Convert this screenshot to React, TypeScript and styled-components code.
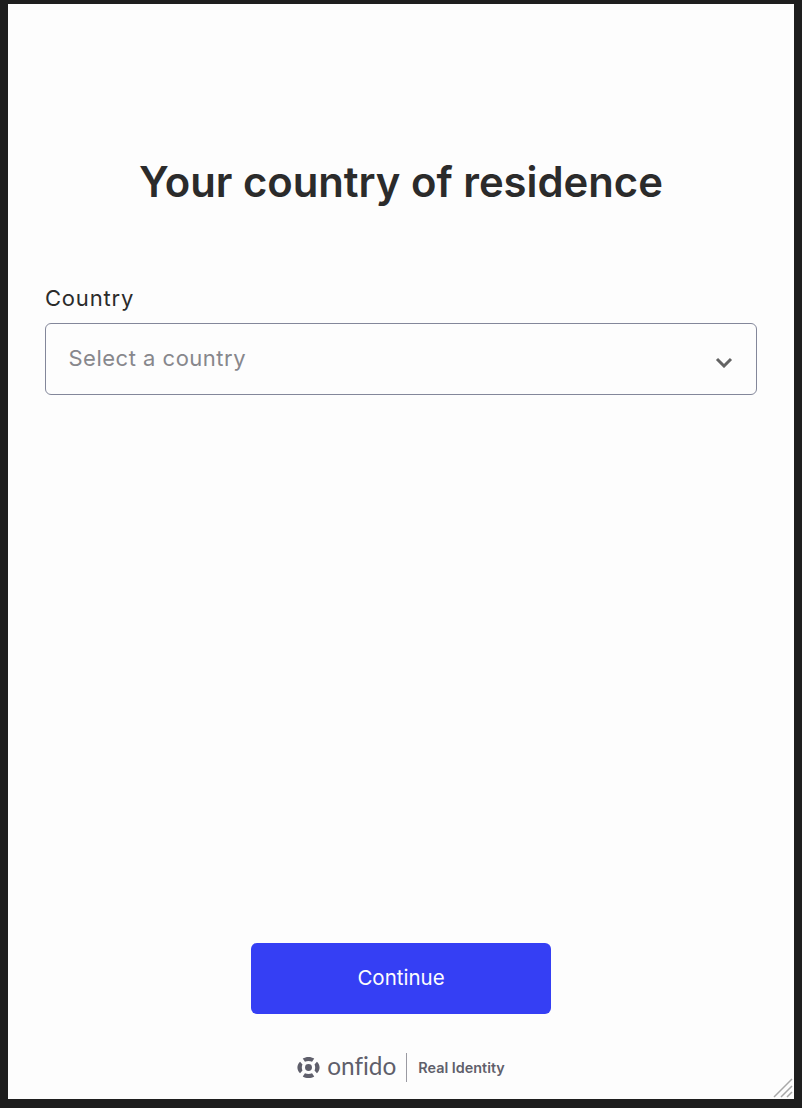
import React from "react";
import styled, { createGlobalStyle } from "styled-components";

const GlobalStyle = createGlobalStyle`
  html, body {
    margin: 0;
    padding: 0;
    height: 100%;
    background: #1e1e1e;
  }
  #root {
    height: 100%;
  }
`;

const App: React.FC = () => {
  return (
    <>
      <GlobalStyle />
      <Frame>
        <Card>
          <Title>Your country of residence</Title>
          <Field>
            <Label>Country</Label>
            <SelectBox>
              <Placeholder>Select a country</Placeholder>
              <Chevron viewBox="0 0 18 12" aria-hidden="true">
                <path d="M2 3l7 7 7-7" />
              </Chevron>
            </SelectBox>
          </Field>
          <Actions>
            <ContinueButton type="button">Continue</ContinueButton>
          </Actions>
          <Footer>
            <LogoMark viewBox="0 0 24 24" aria-hidden="true">
              <circle cx="12" cy="12" r="3.6" />
              <path d="M6 2.6C9.4.4 14.6.4 18 2.6L15.7 6C13.5 5.1 10.5 5.1 8.3 6Z" />
              <path d="M6 21.4C9.4 23.6 14.6 23.6 18 21.4L15.7 18C13.5 18.9 10.5 18.9 8.3 18Z" />
              <path d="M3.2 6C-.5 9.6-.5 14.4 3.2 18L5.7 15.2C4.8 13.3 4.8 10.7 5.7 8.8Z" />
              <path d="M20.8 6C24.5 9.6 24.5 14.4 20.8 18L18.3 15.2C19.2 13.3 19.2 10.7 18.3 8.8Z" />
            </LogoMark>
            <Wordmark>onfido</Wordmark>
            <Divider />
            <Tagline>Real Identity</Tagline>
          </Footer>
          <ResizeGrip viewBox="0 0 20 20" aria-hidden="true">
            <path d="M1 19L19 1M8 19L19 8M14 19l5-5" />
          </ResizeGrip>
        </Card>
      </Frame>
    </>
  );
};

const Frame = styled.div`
  box-sizing: border-box;
  height: 1108px;
  padding: 4px 8px 9px;
  background: #1e1e1e;
`;

const Card = styled.div`
  position: relative;
  box-sizing: border-box;
  height: 100%;
  display: flex;
  flex-direction: column;
  padding: 0 37px;
  background: #fdfdfd;
  font-family: Inter, "Liberation Sans", sans-serif;
`;

const Title = styled.h1`
  margin: 150px 0 0;
  font-size: 41.8px;
  line-height: 56px;
  font-weight: 600;
  color: #2b2b2b;
  text-align: center;
  white-space: nowrap;
`;

const Field = styled.div`
  display: flex;
  flex-direction: column;
  margin-top: 72px;
`;

const Label = styled.label`
  font-size: 22px;
  letter-spacing: 0.8px;
  line-height: 32px;
  color: #2b2b2b;
  margin-bottom: 9px;
`;

const SelectBox = styled.div`
  box-sizing: border-box;
  height: 72px;
  display: flex;
  align-items: center;
  justify-content: space-between;
  padding: 0 23px 2px 22.5px;
  border: 1px solid #83879a;
  border-radius: 6px;
`;

const Placeholder = styled.span`
  font-size: 22px;
  letter-spacing: 0.5px;
  color: #87878c;
`;

const Chevron = styled.svg`
  width: 18px;
  height: 12px;
  margin-top: 8px;
  fill: none;
  stroke: #636363;
  stroke-width: 3;
`;

const Actions = styled.div`
  display: flex;
  justify-content: center;
  margin-top: auto;
`;

const ContinueButton = styled.button`
  width: 300px;
  height: 71px;
  padding: 0 0 2px;
  border: 0;
  border-radius: 6px;
  background: #353ff4;
  color: #fdfdfd;
  font-family: inherit;
  font-size: 20.5px;
`;

const Footer = styled.div`
  display: flex;
  align-items: center;
  justify-content: center;
  height: 30px;
  margin: 38px 0 17px;
`;

const LogoMark = styled.svg`
  width: 23px;
  height: 23px;
  margin-right: 7px;
  fill: #5f5f6b;
`;

const Wordmark = styled.span`
  font-family: Lato, sans-serif;
  font-weight: 400;
  font-size: 24.4px;
  font-variant-ligatures: none;
  line-height: 30px;
  margin-top: -3px;
  color: #5f5f6b;
`;

const Divider = styled.span`
  width: 1px;
  height: 29px;
  margin: 0 11px 0 10px;
  background: #9a9aa2;
`;

const Tagline = styled.span`
  font-size: 14.4px;
  font-weight: 600;
  color: #5f5f6b;
`;

const ResizeGrip = styled.svg`
  position: absolute;
  right: 1px;
  bottom: 1px;
  width: 20px;
  height: 20px;
  fill: none;
  stroke: #a8a8a8;
  stroke-width: 1.5;
`;

export default App;
